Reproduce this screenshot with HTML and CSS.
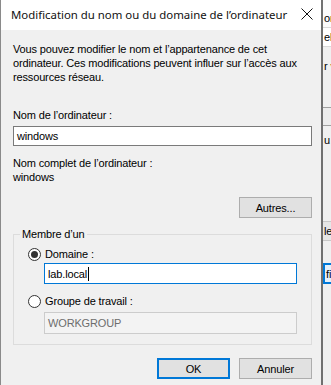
FILE: index.html
```html
<!DOCTYPE html>
<html lang="fr">
<head>
<meta charset="utf-8">
<link rel="stylesheet" href="styles.css">
</head>
<body>
<div class="screen">
  <div class="dialog">
    <div class="titlebar">
      <span class="title">Modification du nom ou du domaine de l’ordinateur</span>
      <svg class="close" width="12" height="12" viewBox="0 0 12 12"><path d="M0.5 0.5 L11.5 11.5 M11.5 0.5 L0.5 11.5" stroke="#111" stroke-width="1" fill="none"/></svg>
    </div>
    <div class="content">
      <p class="intro">Vous pouvez modifier le nom et l’appartenance de cet<br>ordinateur. Ces modifications peuvent influer sur l’accès aux<br>ressources réseau.</p>
      <div class="label first">Nom de l’ordinateur :</div>
      <div class="input name">windows</div>
      <div class="label gap">Nom complet de l’ordinateur :</div>
      <div class="label">windows</div>
      <div class="row-end more"><div class="btn">Autres...</div></div>
      <fieldset class="group">
        <legend>Membre d’un</legend>
        <div class="radio-row first-radio"><span class="radio checked"></span><span>Domaine :</span></div>
        <div class="input focus">lab.local<span class="caret"></span></div>
        <div class="radio-row second-radio"><span class="radio"></span><span>Groupe de travail :</span></div>
        <div class="input disabled">WORKGROUP</div>
      </fieldset>
      <div class="row-end actions">
        <div class="btn default">OK</div>
        <div class="btn">Annuler</div>
      </div>
    </div>
  </div>
  <div class="behind">
    <div class="b-top"><span class="b-text">or</span></div>
    <div class="b-box1"><span class="b-text">el</span></div>
    <div class="b-line2"><span class="b-text">r v</span></div>
    <div class="b-box2"></div>
    <div class="b-line3"><span class="b-text">u</span></div>
    <div class="b-box3"><span class="b-text">le</span></div>
    <div class="b-btn"><span class="b-text">fie</span></div>
  </div>
</div>
</body>
</html>
```
FILE: styles.css
```css
html, body {
  margin: 0;
  padding: 0;
  background: #f0f0f0;
}
.screen {
  display: flex;
  width: 331px;
  height: 385px;
  overflow: hidden;
  font-family: "Liberation Sans", Arial, sans-serif;
  font-size: 11px;
  letter-spacing: -0.15px;
  color: #000;
}
.dialog {
  width: 323px;
  flex: none;
  box-sizing: border-box;
  border-left: 1px solid #8a8a8a;
  border-right: 2px solid #707070;
  background: #f0f0f0;
  display: flex;
  flex-direction: column;
}
.titlebar {
  height: 30px;
  flex: none;
  background: #fff;
  display: flex;
  align-items: center;
  justify-content: space-between;
  padding: 0 8px 0 10px;
}
.title {
  font-family: "Noto Sans", "Open Sans", sans-serif;
  font-size: 11.4px;
  letter-spacing: 0;
  color: #111;
  padding-bottom: 1px;
}
.close {
  display: block;
  margin-bottom: 2px;
}
.content {
  padding: 12px 9px 0 12px;
  display: flex;
  flex-direction: column;
}
.intro {
  margin: 0;
  line-height: 14px;
}
.label {
  line-height: 14px;
}
.label.first {
  margin-top: 24px;
}
.label.gap {
  margin-top: 10px;
}
.input {
  box-sizing: border-box;
  height: 20px;
  margin-top: 4px;
  border: 1px solid #7a7a7a;
  background: #fff;
  padding: 0 3px;
  line-height: 18px;
  display: flex;
  align-items: center;
}
.input.focus {
  border-color: #0078d7;
  height: 21px;
  margin-top: 2px;
  margin-left: 16px;
  width: 253px;
}
.caret {
  display: inline-block;
  width: 1px;
  height: 14px;
  background: #000;
  margin-left: 1px;
}
.input.disabled {
  border-color: #cccccc;
  background: #f3f3f3;
  color: #6d6d6d;
  height: 22px;
  margin-top: 4px;
  margin-left: 16px;
  width: 253px;
}
.row-end {
  display: flex;
  justify-content: flex-end;
  gap: 9px;
}
.more {
  margin-top: 13px;
}
.btn {
  box-sizing: border-box;
  width: 73px;
  height: 21px;
  border: 1px solid #adadad;
  background: #e1e1e1;
  display: flex;
  align-items: center;
  justify-content: center;
}
.btn.default {
  border: 2px solid #0078d7;
}
.group {
  margin: 9px 0 0 0;
  padding: 0 14px 10px 14px;
  border: 1px solid #dcdcdc;
  min-width: 0;
}
.group legend {
  padding: 0 2px;
  margin-left: -8px;
  line-height: 14px;
}
.radio-row {
  display: flex;
  align-items: center;
  gap: 4px;
  height: 14px;
}
.first-radio {
  margin-top: 6px;
}
.second-radio {
  margin-top: 10px;
}
.radio {
  box-sizing: border-box;
  width: 13px;
  height: 13px;
  border-radius: 50%;
  border: 1px solid #333;
  background: #fff;
  display: flex;
  align-items: center;
  justify-content: center;
}
.radio.checked::after {
  content: "";
  width: 7px;
  height: 7px;
  border-radius: 50%;
  background: #333;
}
.actions {
  margin-top: 13px;
}
.behind {
  flex: none;
  width: 8px;
  background: #f0f0f0;
  display: flex;
  flex-direction: column;
  overflow: hidden;
}
.b-text {
  white-space: nowrap;
  line-height: 14px;
  display: block;
  padding-left: 1px;
}
.b-top {
  height: 28px;
  background: #fbfbfb;
  box-sizing: border-box;
  padding-top: 11px;
  border-bottom: 1px solid #dadada;
}
.b-box1 {
  height: 16px;
  background: #fff;
  border-bottom: 1px solid #dadada;
  padding-top: 2px;
}
.b-line2 {
  margin-top: 8px;
  height: 20px;
  padding-top: 4px;
}
.b-box2 {
  margin-top: 28px;
  height: 17px;
  border-top: 1px solid #a0a0a0;
  border-bottom: 1px solid #a0a0a0;
  background: #ececec;
}
.b-line3 {
  margin-top: 7px;
  height: 14px;
}
.b-box3 {
  margin-top: 74px;
  background: #e6e6e6;
  border-top: 1px solid #c8c8c8;
  border-bottom: 1px solid #c8c8c8;
  padding-top: 2px;
  box-sizing: border-box;
  height: 20px;
}
.b-btn {
  margin-top: 22px;
  height: 21px;
  box-sizing: border-box;
  border: 2px solid #0078d7;
  border-right: none;
  background: #e5f1fb;
  display: flex;
  align-items: center;
}
```
